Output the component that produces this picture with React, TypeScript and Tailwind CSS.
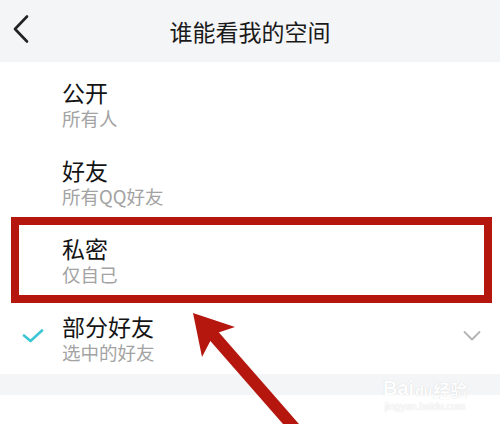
const options = [
  { title: '公开', sub: '所有人' },
  { title: '好友', sub: '所有QQ好友' },
  { title: '私密', sub: '仅自己', boxed: true },
  { title: '部分好友', sub: '选中的好友', checked: true, more: true },
]

export default function App() {
  return (
    <div
      className="relative w-[500px] h-[424px] overflow-hidden bg-white"
      style={{ fontFamily: '"Noto Sans CJK SC", "Noto Sans", sans-serif' }}
    >
      {/* Header */}
      <div className="relative h-[62px] bg-[#f4f5f7] flex items-center justify-center">
        <svg className="absolute left-[10px] top-[14px]" width="22" height="30" viewBox="0 0 22 30">
          <path d="M17 2.5 L5 15 L17 27.5" fill="none" stroke="#222" strokeWidth="2.6" strokeLinecap="round" strokeLinejoin="round" />
        </svg>
        <span className="text-[23px] text-[#1a1a1a] leading-none">谁能看我的空间</span>
      </div>

      {/* Options */}
      <div className="flex flex-col">
        {options.map((o) => (
          <div key={o.title} className="relative h-[78px] pl-[62px] pt-[16px] flex flex-col">
            {o.checked && (
              <svg className="absolute left-[22px] top-[33px]" width="22" height="14" viewBox="0 0 22 14">
                <path d="M2 6.5 L8.5 12 L20 1.5" fill="none" stroke="#3bc6d4" strokeWidth="2.6" strokeLinecap="round" strokeLinejoin="round" />
              </svg>
            )}
            <span className="text-[23px] leading-[29px] text-[#141414]">{o.title}</span>
            <span className="text-[18.5px] leading-[23px] text-[#a3a3a3]">{o.sub}</span>
            {o.more && (
              <svg className="absolute left-[463px] top-[34px]" width="18" height="12" viewBox="0 0 18 12">
                <path d="M1.5 2 L9 9.5 L16.5 2" fill="none" stroke="#b3b3b3" strokeWidth="1.8" strokeLinecap="round" strokeLinejoin="round" />
              </svg>
            )}
            {o.boxed && (
              <div className="absolute left-[11px] right-[8px] top-[-1px] bottom-[-7px] border-[8px] border-[#b5170f] pointer-events-none" />
            )}
          </div>
        ))}
      </div>

      {/* Section gap */}
      <div className="h-[21px] bg-[#f4f5f7]" />
      <div className="h-[40px] bg-white" />

      {/* Watermark */}
      <div className="absolute left-[383px] top-[378px] flex flex-col items-center text-white opacity-90 [text-shadow:0_0_1px_#c8c8c8]">
        <div className="flex items-end text-[20px] font-bold leading-none" style={{ fontFamily: '"Liberation Sans", sans-serif' }}>
          <span>Bai</span>
          <span className="text-[14px] mx-[1px]">du</span>
          <span className="text-[17px]" style={{ fontFamily: '"Noto Sans CJK SC", sans-serif' }}>经验</span>
        </div>
        <span className="text-[10px] leading-none mt-[4px]" style={{ fontFamily: '"Liberation Sans", sans-serif' }}>jingyan.baidu.com</span>
      </div>

      {/* Annotation arrow */}
      <svg className="absolute inset-0 pointer-events-none" width="500" height="424" viewBox="0 0 500 424">
        <line x1="207" y1="328" x2="298" y2="432" stroke="#b5170f" strokeWidth="12" />
        <polygon points="193,313 235,327 214,334 202,357" fill="#b5170f" />
      </svg>
    </div>
  )
}
